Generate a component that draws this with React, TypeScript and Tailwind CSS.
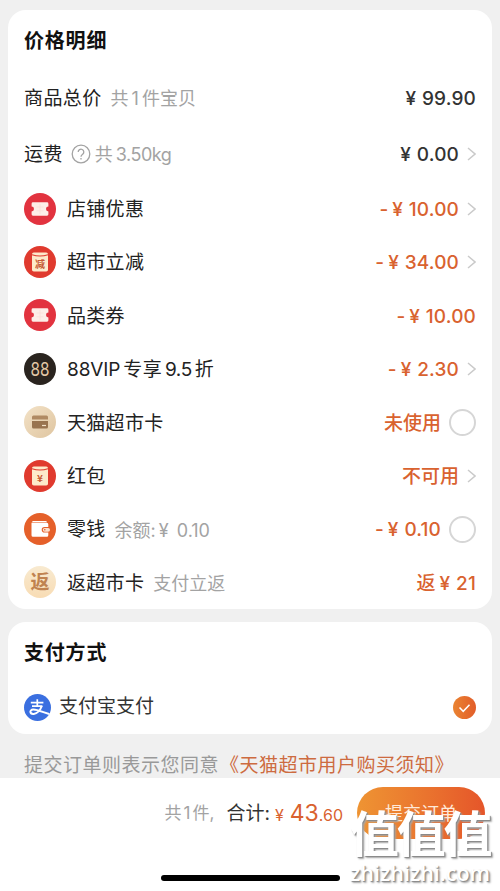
import React from 'react';

type Trailing = 'arrow' | 'radio' | 'none';

interface PriceRow {
  icon: React.ReactNode;
  label: React.ReactNode;
  note?: React.ReactNode;
  value: React.ReactNode;
  trailing: Trailing;
}

const Arrow = () => (
  <svg className="ml-2 h-[14px] w-[9px]" viewBox="0 0 9 14" fill="none" stroke="#cacaca" strokeWidth="1.5">
    <path d="M1 1l7 6-7 6" />
  </svg>
);

const Radio = () => <span className="ml-[8px] size-[27px] rounded-full border-2 border-[#d6d6d6]" />;

const CouponIcon = () => (
  <svg className="size-8" viewBox="0 0 32 32">
    <circle cx="16" cy="16" r="16" fill="#e2333f" />
    <path
      d="M9 9.3h14a1.4 1.4 0 0 1 1.4 1.4v2.9a2.4 2.4 0 0 0 0 4.8v2.9a1.4 1.4 0 0 1-1.4 1.4H9a1.4 1.4 0 0 1-1.4-1.4v-2.9a2.4 2.4 0 0 0 0-4.8v-2.9A1.4 1.4 0 0 1 9 9.3z"
      fill="#fdeee8"
    />
    <path d="M12.5 14h7M12.5 17.8h7M16 11v10" stroke="#fae0da" strokeWidth="0.9" />
  </svg>
);

const PacketIcon = ({ text }: { text: string }) => (
  <svg className="size-8" viewBox="0 0 32 32">
    <circle cx="16" cy="16" r="16" fill="#e03a2e" />
    <rect x="8" y="6.5" width="16" height="19" rx="1.8" fill="#fdeacb" />
    <path d="M8 8.8q8 2.4 16 0" fill="none" stroke="#e03a2e" strokeWidth="1.1" />
    <text
      x="16"
      y="21.5"
      textAnchor="middle"
      fontSize="10"
      fontWeight="700"
      fill="#c65a35"
      fontFamily='"Noto Sans CJK SC", sans-serif'
    >
      {text}
    </text>
  </svg>
);

const VipIcon = () => (
  <svg className="size-8" viewBox="0 0 32 32">
    <circle cx="16" cy="16" r="16" fill="#2a241f" />
    <text x="6.6" y="22.6" fontSize="19" textLength="19" lengthAdjust="spacingAndGlyphs" fill="#e3c8a6">
      88
    </text>
  </svg>
);

const CardIcon = () => (
  <svg className="size-8" viewBox="0 0 32 32">
    <defs>
      <linearGradient id="card" x1="0" y1="0" x2="1" y2="1">
        <stop offset="0" stopColor="#f3e2c7" />
        <stop offset="1" stopColor="#dfc5a0" />
      </linearGradient>
    </defs>
    <circle cx="16" cy="16" r="16" fill="url(#card)" />
    <path d="M9.5 9.5h13a1.5 1.5 0 0 1 1.5 1.5v2.5H8V11a1.5 1.5 0 0 1 1.5-1.5z" fill="#b08a63" />
    <path d="M8 15h16v6a1.5 1.5 0 0 1-1.5 1.5h-13A1.5 1.5 0 0 1 8 21z" fill="#99744f" />
    <path d="M18 19.5h4" stroke="#f3e2c7" strokeWidth="1.2" />
  </svg>
);

const WalletIcon = () => (
  <svg className="size-8" viewBox="0 0 32 32">
    <circle cx="16" cy="16" r="16" fill="#e5602a" />
    <path d="M9 8h12.5a1.5 1.5 0 0 1 1.5 1.2H8A1.2 1.2 0 0 1 9 8z" fill="#fff" />
    <path
      d="M7.5 9.8h15.3a1.5 1.5 0 0 1 1.5 1.5v2.7h-3.8a2.8 2.8 0 0 0 0 5.6h3.8v2.6a1.5 1.5 0 0 1-1.5 1.500H9a1.5 1.5 0 0 1-1.5-1.500z"
      fill="#fff"
    />
    <rect x="18.8" y="14.9" width="7.2" height="3.8" rx="1.9" fill="#fbe0cf" />
    <circle cx="20.8" cy="16.8" r="0.8" fill="#e5602a" />
  </svg>
);

const ReturnIcon = () => (
  <span className="flex size-8 items-center justify-center rounded-full bg-linear-to-b from-[#f8ead0] to-[#f8dcb4] pt-[2px] text-[19px] font-bold text-[#c08350]">
    返
  </span>
);

const AlipayIcon = () => (
  <svg className="size-[27px]" viewBox="0 0 27 27">
    <defs>
      <clipPath id="alipay">
        <circle cx="13.5" cy="13.5" r="13.5" />
      </clipPath>
    </defs>
    <g clipPath="url(#alipay)">
      <rect width="27" height="27" fill="#3a6fe0" />
      <g fill="none" stroke="#fff">
        <path d="M6.8 8.6h12.6M13.3 5.2v6.6M8 12.1h10.4" strokeWidth="1.7" />
        <path
          d="M17.8 12c-1.500 4-4.300 7.500-8 7.900-4.300.4-4.500-4.100-.7-4.300 4.100-.2 9.600 2.600 18.400 5.200"
          strokeWidth="2"
        />
      </g>
    </g>
  </svg>
);

const money = (amount: string, sign = '') => (
  <>
    {sign && <span className="mr-[4px]">{sign}</span>}
    <span className="mr-[6px]">¥</span>
    <span className="tracking-[0.15px]">{amount}</span>
  </>
);

const rows: PriceRow[] = [
  { icon: <CouponIcon />, label: '店铺优惠', value: money('10.00', '-'), trailing: 'arrow' },
  { icon: <PacketIcon text="减" />, label: '超市立减', value: money('34.00', '-'), trailing: 'arrow' },
  { icon: <CouponIcon />, label: '品类券', value: money('10.00', '-'), trailing: 'none' },
  {
    icon: <VipIcon />,
    label: (
      <>
        <span className="tracking-[-0.1px]">88VIP</span>
        <span className="mx-[3px]">专享</span>
        <span className="tracking-[-0.4px]">9.5</span>
        <span className="ml-[3px]">折</span>
      </>
    ),
    value: money('2.30', '-'),
    trailing: 'arrow',
  },
  { icon: <CardIcon />, label: '天猫超市卡', value: '未使用', trailing: 'radio' },
  { icon: <PacketIcon text="¥" />, label: '红包', value: '不可用', trailing: 'arrow' },
  {
    icon: <WalletIcon />,
    label: '零钱',
    note: (
      <>
        余额:<span className="mx-[3px]">¥</span> 0.10
      </>
    ),
    value: money('0.10', '-'),
    trailing: 'radio',
  },
  {
    icon: <ReturnIcon />,
    label: '返超市卡',
    note: '支付立返',
    value: (
      <>
        <span className="mr-[4px]">返</span>
        {money('21')}
      </>
    ),
    trailing: 'none',
  },
];

const PriceCard = () => (
  <section className="mx-2 h-[599px] rounded-[18px] bg-white px-4">
    <h2 className="flex h-[60px] items-center pt-[2px] text-[20px] font-bold tracking-[0.8px] text-[#111]">
      价格明细
    </h2>
    <div className="flex h-[56px] items-center text-[19px]">
      <span className="pt-[2px] tracking-[0.4px]">商品总价</span>
      <span className="ml-[9px] text-[18px] text-[#a3a3a3]">
        共<span className="mx-[3px]">1</span>件宝贝
      </span>
      <span className="ml-auto pt-[2px] font-medium text-[#333]">{money('99.90')}</span>
    </div>
    <div className="flex h-[56px] items-center text-[19px]">
      <span className="pt-[2px] tracking-[0.4px]">运费</span>
      <svg className="ml-[8px] size-[20px]" viewBox="0 0 20 20" fill="none" stroke="#a3a3a3" strokeWidth="1.3">
        <circle cx="10" cy="10" r="8.8" />
        <path d="M7.2 8a2.8 2.8 0 1 1 4.5 2.2c-1.1.8-1.7 1.2-1.7 2.5M10 14v1.5" />
      </svg>
      <span className="ml-[4px] text-[18px] text-[#a3a3a3]">
        共<span className="ml-[3px] tracking-[-0.5px]">3.50kg</span>
      </span>
      <span className="ml-auto pt-[2px] font-medium text-[#333]">{money('0.00')}</span>
      <Arrow />
    </div>
    {rows.map((row, index) => (
      <div key={index} className="flex h-[53.4px] items-center text-[19px]">
        {row.icon}
        <span className="ml-[11px] pt-[3px] tracking-[0.3px]">{row.label}</span>
        {row.note && <span className="ml-[9px] pt-[2px] text-[18px] text-[#a3a3a3]">{row.note}</span>}
        <span className="ml-auto pt-[3px] font-medium text-[#d9622f]">{row.value}</span>
        {row.trailing === 'arrow' && <Arrow />}
        {row.trailing === 'radio' && <Radio />}
      </div>
    ))}
  </section>
);

const PaymentCard = () => (
  <section className="mx-2 mt-[13px] h-[112px] rounded-[18px] bg-white px-4">
    <h2 className="flex h-[59px] items-center pt-[2px] text-[20px] font-bold tracking-[0.8px] text-[#111]">
      支付方式
    </h2>
    <div className="flex h-[53px] items-center text-[19px] text-[#333]">
      <AlipayIcon />
      <span className="ml-[8px]">支付宝支付</span>
      <svg className="ml-auto size-[23px]" viewBox="0 0 23 23">
        <defs>
          <linearGradient id="check" x1="0" y1="0" x2="1" y2="0">
            <stop offset="0" stopColor="#ea8432" />
            <stop offset="1" stopColor="#e25d29" />
          </linearGradient>
        </defs>
        <circle cx="11.5" cy="11.5" r="11.5" fill="url(#check)" />
        <path d="M6.5 11.5l3.7 3.8 6.3-6.5" fill="none" stroke="#fff" strokeWidth="1.5" />
      </svg>
    </div>
  </section>
);

const BottomBar = () => (
  <footer className="relative h-[113px] bg-white">
    <div className="flex h-[70px] items-center justify-end pr-[15px]">
      <span className="pt-[2px] text-[17px] text-[#a3a3a3]">
        共<span className="mx-[2px]">1</span>件,
      </span>
      <span className="ml-[12px] pt-[2px] text-[19px] text-[#333]">合计:</span>
      <span className="ml-[5px] flex items-baseline text-[#d9622f]">
        <span className="text-[16px]">¥</span>
        <span className="ml-[6px] text-[23px]">43</span>
        <span className="text-[16px]">.60</span>
      </span>
      <button className="ml-[14px] h-[52px] w-[128px] rounded-full bg-linear-to-r from-[#ee9433] to-[#e5552a] text-[18px] text-[#ffe9d8]">
        提交订单
      </button>
    </div>
    <div className="mx-auto mt-[27px] h-[6px] w-[179px] rounded-full bg-black" />
    {/* 水印 */}
    <div className="absolute top-[29px] left-[350px] text-white [text-shadow:1px_1px_1px_#888,2px_2px_2px_#aaa]">
      <div className="text-[49px] leading-[56px] font-bold tracking-[-2.2px]">值值值</div>
      <div className="font-['Open_Sans',sans-serif] text-[21.5px] leading-[20px] font-semibold">zhizhizhi.com</div>
    </div>
  </footer>
);

export default function App() {
  return (
    <main className="h-[891px] w-[500px] overflow-hidden bg-[#f0f0f0] pt-[10px] font-['Inter','Noto_Sans_CJK_SC',sans-serif] whitespace-nowrap text-[#222]">
      <PriceCard />
      <PaymentCard />
      <p className="flex h-[44px] items-center pt-[20px] pl-6 text-[19px] tracking-[0.5px] text-[#999]">
        提交订单则表示您同意<span className="ml-[1px] text-[#cd6b40]">《天猫超市用户购买须知》</span>
      </p>
      <BottomBar />
    </main>
  );
}
